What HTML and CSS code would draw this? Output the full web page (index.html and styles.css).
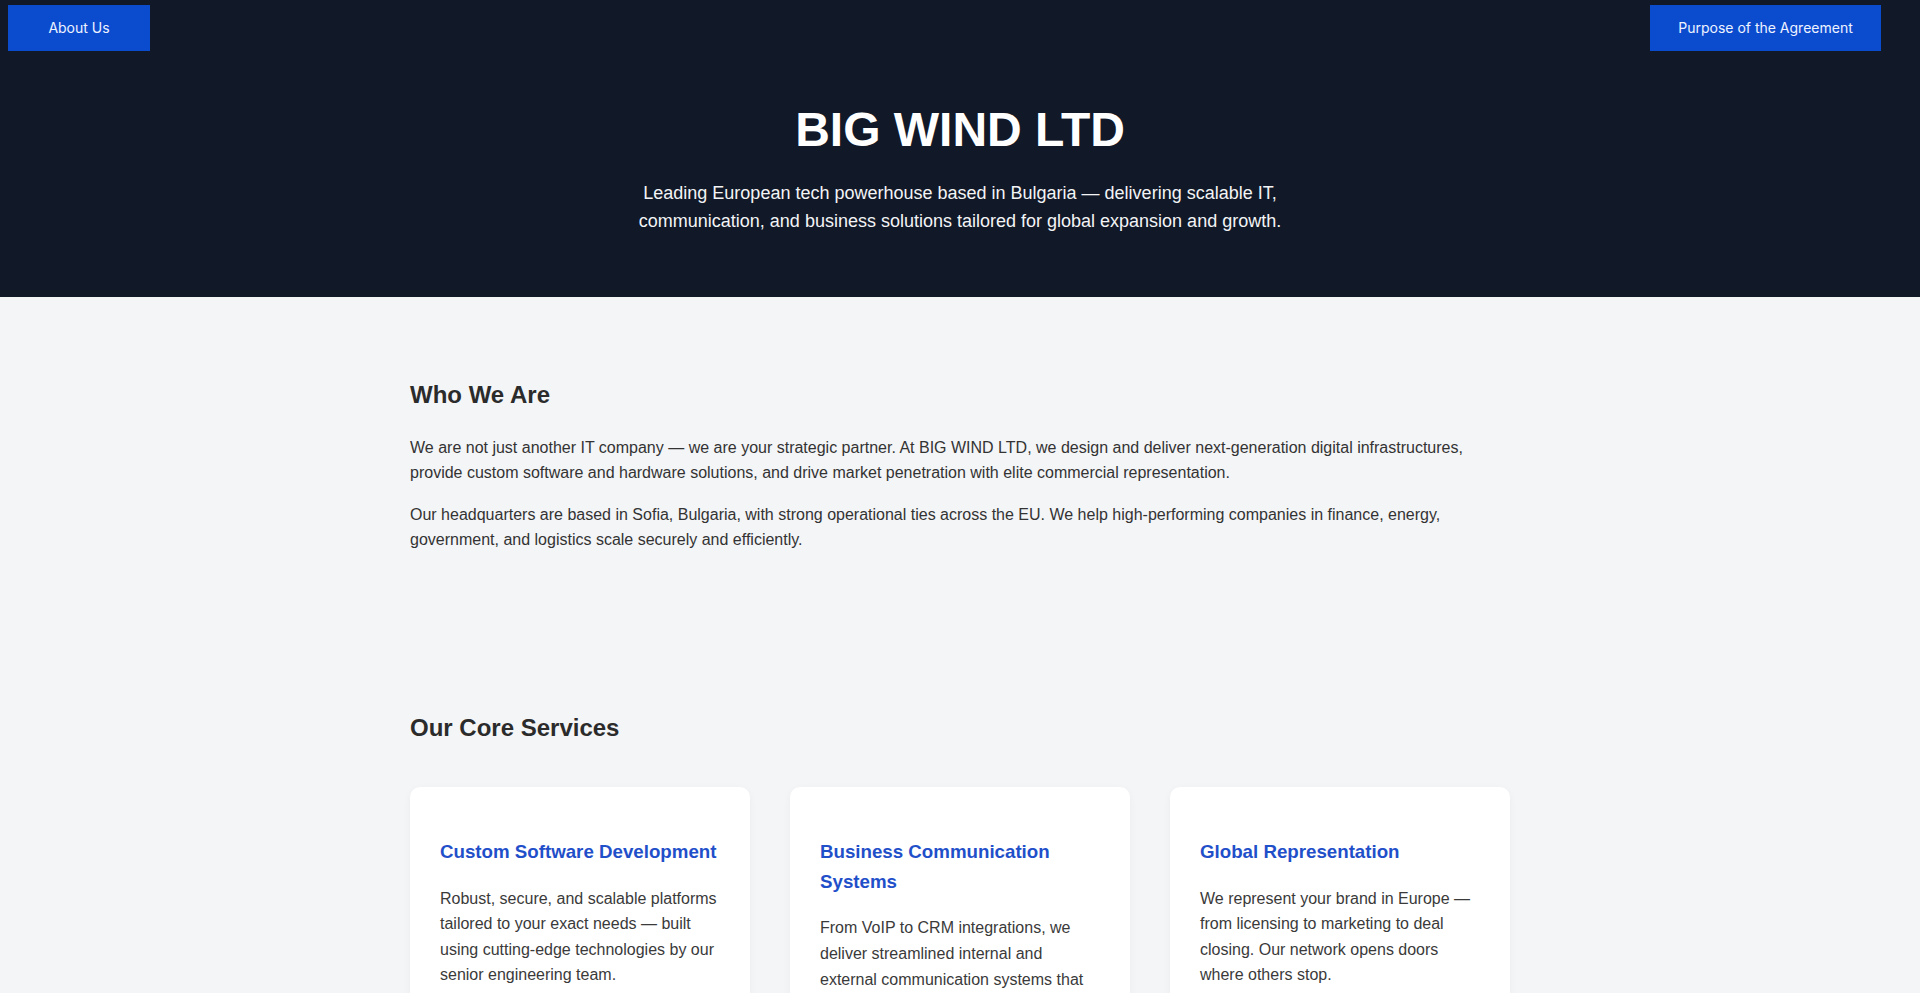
FILE: index.html
```html
<!DOCTYPE html>
<html lang="en">
<head>
<meta charset="utf-8">
<title>BIG WIND LTD</title>
<link rel="stylesheet" href="styles.css">
</head>
<body>
<header class="hero">
  <nav class="topnav">
    <a class="navbtn navbtn-about" href="#about">About Us</a>
    <a class="navbtn navbtn-purpose" href="#purpose">Purpose of the Agreement</a>
  </nav>
  <div class="hero-body">
    <h1 class="hero-title">BIG WIND LTD</h1>
    <p class="hero-sub">Leading European tech powerhouse based in Bulgaria — delivering scalable IT, communication, and business solutions tailored for global expansion and growth.</p>
  </div>
</header>
<main>
  <section class="section" id="about">
    <div class="container">
      <h2 class="section-title">Who We Are</h2>
      <p class="text">We are not just another IT company — we are your strategic partner. At BIG WIND LTD, we design and deliver next-generation digital infrastructures, provide custom software and hardware solutions, and drive market penetration with elite commercial representation.</p>
      <p class="text">Our headquarters are based in Sofia, Bulgaria, with strong operational ties across the EU. We help high-performing companies in finance, energy, government, and logistics scale securely and efficiently.</p>
    </div>
  </section>
  <section class="section">
    <div class="container">
      <h2 class="section-title">Our Core Services</h2>
      <div class="cards">
        <div class="card">
          <h3 class="card-title">Custom Software Development</h3>
          <p class="card-text">Robust, secure, and scalable platforms tailored to your exact needs — built using cutting-edge technologies by our senior engineering team.</p>
        </div>
        <div class="card">
          <h3 class="card-title">Business Communication Systems</h3>
          <p class="card-text">From VoIP to CRM integrations, we deliver streamlined internal and external communication systems that keep your teams connected and productive.</p>
        </div>
        <div class="card">
          <h3 class="card-title">Global Representation</h3>
          <p class="card-text">We represent your brand in Europe — from licensing to marketing to deal closing. Our network opens doors where others stop.</p>
        </div>
      </div>
    </div>
  </section>
</main>
</body>
</html>
```
FILE: styles.css
```css
* { box-sizing: border-box; }

html, body {
  margin: 0;
  padding: 0;
}

body {
  font-family: "Liberation Sans", Arial, sans-serif;
  font-size: 16px;
  line-height: 1.6;
  color: #333333;
  background: #f4f5f7;
}

.hero {
  background: #111827;
  color: #ffffff;
  padding: 0 0 61px;
}

.topnav {
  display: flex;
  justify-content: space-between;
  align-items: flex-start;
  padding: 5px 39px 0 8px;
}

.navbtn {
  display: flex;
  align-items: center;
  justify-content: center;
  height: 46px;
  background: #0b4ccf;
  color: #eef3ff;
  text-decoration: none;
  font-family: Inter, "Noto Sans", sans-serif;
  font-size: 14px;
  font-weight: 400;
}

.navbtn-about { width: 142px; }
.navbtn-purpose { width: 231px; }

.hero-body {
  text-align: center;
  padding: 50px 20px 0;
}

.hero-title {
  margin: 0 0 20px;
  font-size: 48px;
  line-height: 1.2;
  font-weight: 700;
  color: #ffffff;
}

.hero-sub {
  margin: 0 auto;
  max-width: 700px;
  font-size: 18px;
  line-height: 1.6;
  color: #f3f4f6;
}

.section {
  padding: 60px 20px 61px;
}

.container {
  max-width: 1100px;
  margin: 0 auto;
}

.section-title {
  font-size: 24px;
  font-weight: 700;
  color: #2b2b2b;
  margin: 19px 0 20px;
}

.text {
  margin: 16px 0;
}

.cards {
  display: grid;
  grid-template-columns: repeat(3, 1fr);
  gap: 40px;
  margin-top: 40px;
}

.card {
  background: #ffffff;
  border-radius: 10px;
  padding: 30px;
  box-shadow: 0 2px 8px rgba(0, 0, 0, 0.04);
}

.card-title {
  font-size: 18.72px;
  font-weight: 700;
  color: #1f4fc9;
  margin: 19.5px 0 18.72px;
}

.card-text {
  margin: 16px 0;
  color: #3a3a3a;
}
```
